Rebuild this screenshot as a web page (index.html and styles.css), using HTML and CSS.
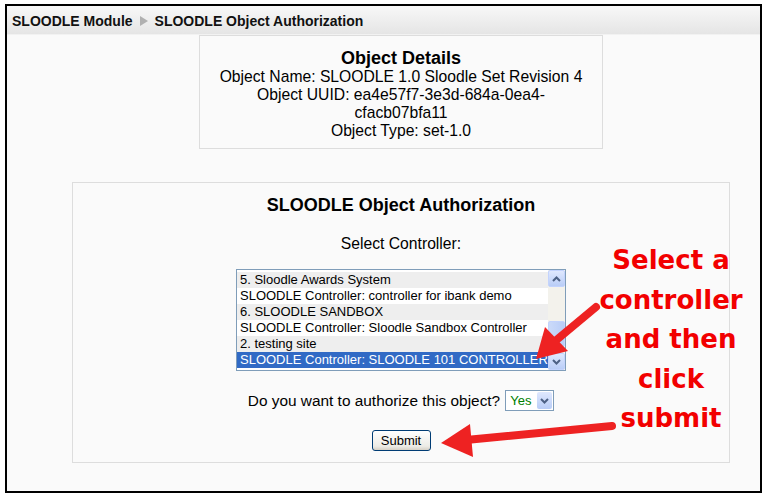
FILE: index.html
```html
<!DOCTYPE html>
<html>
<head>
<meta charset="utf-8">
<link rel="stylesheet" href="styles.css">
</head>
<body>
<div class="frame">
  <div class="crumbs">
    <span>SLOODLE Module</span>
    <span class="sep"></span>
    <span>SLOODLE Object Authorization</span>
  </div>
  <div class="content">
    <div class="details">
      <h2>Object Details</h2>
      <div>Object Name: SLOODLE 1.0 Sloodle Set Revision 4</div>
      <div>Object UUID: ea4e57f7-3e3d-684a-0ea4-<br>cfacb07bfa11</div>
      <div>Object Type: set-1.0</div>
    </div>
    <div class="auth">
      <h2>SLOODLE Object Authorization</h2>
      <p class="label">Select Controller:</p>
      <div class="listbox">
        <div class="rows">
          <div class="row alt">5. Sloodle Awards System</div>
          <div class="row">SLOODLE Controller: controller for ibank demo</div>
          <div class="row alt">6. SLOODLE SANDBOX</div>
          <div class="row">SLOODLE Controller: Sloodle Sandbox Controller</div>
          <div class="row alt">2. testing site</div>
          <div class="row sel">SLOODLE Controller: SLOODLE 101 CONTROLLER</div>
        </div>
        <div class="scroll">
          <div class="sbtn"><svg width="9" height="6" viewBox="0 0 9 6"><polyline points="1,5 4.5,1.5 8,5" fill="none" stroke="#4d6185" stroke-width="2"/></svg></div>
          <div class="gap1"></div>
          <div class="thumb"></div>
          <div class="gap2"></div>
          <div class="sbtn"><svg width="9" height="6" viewBox="0 0 9 6"><polyline points="1,1 4.5,4.5 8,1" fill="none" stroke="#4d6185" stroke-width="2"/></svg></div>
        </div>
      </div>
      <div class="question">
        <span>Do you want to authorize this object?</span>
        <span class="combo"><span class="val">Yes</span><span class="dbtn"><svg width="9" height="6" viewBox="0 0 9 6"><polyline points="1,1 4.5,4.5 8,1" fill="none" stroke="#4d6185" stroke-width="2"/></svg></span></span>
      </div>
      <button class="submit">Submit</button>
    </div>
  </div>
</div>
<div class="note">Select a<br>controller<br>and then<br>click<br>submit</div>
<svg class="arrows" width="767" height="499" viewBox="0 0 767 499">
  <line x1="596" y1="307" x2="554" y2="342" stroke="#ee2222" stroke-width="8" stroke-linecap="round"/>
  <polygon points="536,359 545,327 568,351" fill="#ee2222"/>
  <line x1="612" y1="426" x2="466" y2="440" stroke="#ee2222" stroke-width="8" stroke-linecap="round"/>
  <polygon points="441,443 470,424 473,457" fill="#ee2222"/>
</svg>
</body>
</html>
```

FILE: styles.css
```css
body {
  margin: 0;
  font-family: "Liberation Sans", Arial, sans-serif;
  background: #ffffff;
  color: #000;
}
.frame {
  margin: 4px 0 0 5px;
  width: 753px;
  height: 485px;
  border: 2px solid #000;
  background: #fafafa;
}
.crumbs {
  height: 29px;
  display: flex;
  align-items: center;
  gap: 6px;
  padding-left: 5px;
  padding-top: 1px;
  box-sizing: border-box;
  font-weight: bold;
  font-size: 14px;
  color: #111;
  background: linear-gradient(#f8f8f8, #e5e5e5);
  border-bottom: 1px solid #f2f2f2;
}
.sep {
  width: 0;
  height: 0;
  border-left: 8px solid #b0b0b0;
  border-top: 5px solid transparent;
  border-bottom: 5px solid transparent;
  margin: 0 1px;
}
.content {
  padding-left: 35px;
}
.details {
  width: 402px;
  margin: 0 auto;
  border: 1px solid #dddddd;
  padding: 12px 0 8px;
  text-align: center;
  font-size: 15.7px;
  line-height: 18px;
}
h2 {
  margin: 0;
  font-size: 18px;
  line-height: 20px;
  font-weight: bold;
}
.auth {
  width: 656px;
  margin: 33px auto 0;
  border: 1px solid #dddddd;
  padding: 12px 0 11px;
  text-align: center;
  display: flex;
  flex-direction: column;
  align-items: center;
}
.label {
  margin: 20px 0 0;
  font-size: 15.7px;
  line-height: 18px;
}
.listbox {
  margin-top: 16px;
  width: 328px;
  height: 100px;
  border: 1px solid #7f9db9;
  background: #fff;
  display: flex;
  text-align: left;
}
.rows {
  flex: 1;
  padding: 2px 0;
}
.row {
  height: 16px;
  line-height: 16px;
  font-size: 13px;
  padding-left: 3px;
  white-space: nowrap;
  overflow: hidden;
  background: #ffffff;
}
.row.alt {
  background: #eeeeee;
}
.row.sel {
  background: #316ac5;
  color: #fff;
}
.scroll {
  width: 17px;
  display: flex;
  flex-direction: column;
  background: #f3f2ec;
}
.sbtn {
  height: 15px;
  width: 15px;
  border: 1px solid #c3d3fd;
  border-radius: 2px;
  background: linear-gradient(#dfe8fe, #b9cdf7);
  display: flex;
  align-items: center;
  justify-content: center;
}
.gap1 { height: 34px; }
.gap2 { height: 6px; }
.thumb {
  height: 24px;
  border: 1px solid #c3d3fd;
  border-radius: 2px;
  background: linear-gradient(90deg, #cbdaf9, #b9cdf7);
}
.question {
  margin-top: 19px;
  height: 21px;
  display: flex;
  align-items: center;
  gap: 5px;
  font-size: 15.4px;
}
.combo {
  width: 47px;
  height: 19px;
  border: 1px solid #7f9db9;
  background: #fff;
  display: flex;
  align-items: center;
  justify-content: space-between;
}
.val {
  color: #008000;
  font-size: 13px;
  padding-left: 4px;
}
.dbtn {
  width: 15px;
  height: 17px;
  margin-right: 1px;
  border-radius: 2px;
  background: linear-gradient(#dfe8fe, #b9cdf7);
  display: flex;
  align-items: center;
  justify-content: center;
}
.submit {
  margin-top: 19px;
  width: 59px;
  height: 21px;
  padding: 0;
  font-family: "Liberation Sans", Arial, sans-serif;
  font-size: 13px;
  color: #000;
  border: 1px solid #003c74;
  border-radius: 3px;
  background: linear-gradient(#ffffff, #ecebe6 80%, #d6d0c5);
}
.note {
  position: absolute;
  left: 591px;
  top: 241px;
  width: 160px;
  text-align: center;
  font-family: "DejaVu Sans", sans-serif;
  font-weight: bold;
  font-size: 26px;
  line-height: 39.5px;
  color: #f20000;
}
.arrows {
  position: absolute;
  left: 0;
  top: 0;
  pointer-events: none;
}
```
